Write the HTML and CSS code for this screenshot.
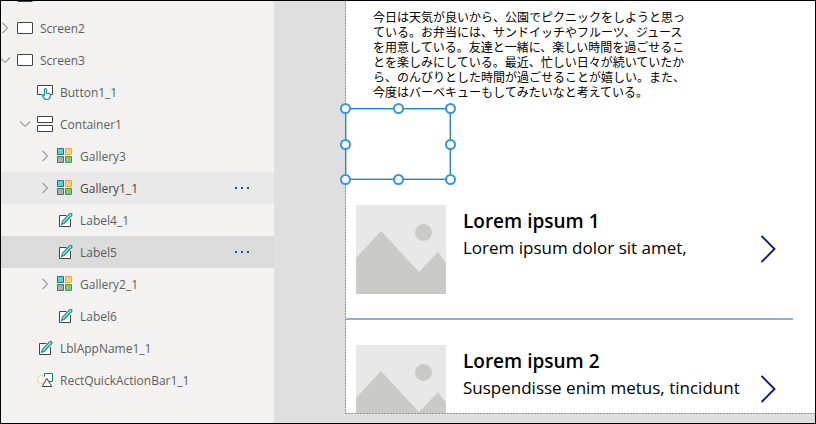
FILE: index.html
```html
<!DOCTYPE html>
<html lang="en">
<head>
<meta charset="utf-8">
<title>App editor</title>
<link rel="stylesheet" href="styles.css">
</head>
<body>
<svg class="defs" aria-hidden="true">
  <symbol id="screen" viewBox="0 0 16 16"><rect x="0.5" y="2.5" width="15" height="11" rx="0.5" fill="#fff" stroke="#444"/></symbol>
  <symbol id="button" viewBox="0 0 16 16"><path d="M5 10.5H.5v-9h15v9H13" fill="#fff" stroke="#444"/><path d="M7.5 11V5.5a1 1 0 0 1 2 0V9l3 .7q1 .3 1 1.3-.1 4.5-4 4.5-2.300 0-4-3.500-.2-1.500 1-1l1 1" fill="#fff" stroke="#10958c" stroke-width="1.200"/></symbol>
  <symbol id="container" viewBox="0 0 16 16"><path d="M.5.5h15v6H.5zM.5 9.500h15v6H.5z" fill="#fff" stroke="#444"/></symbol>
  <symbol id="gallery" viewBox="0 0 16 16"><path d="M.5.5h6v6h-6z" fill="#69cdc9" stroke="#038387"/><path d="M8.500.5h6v6h-6z" fill="#fdd085" stroke="#f2a83b"/><path d="M.5 8.500h6v6h-6z" fill="#b0aeac" stroke="#666"/><path d="M8.500 8.500h6v6h-6z" fill="#88c088" stroke="#3f9c46"/></symbol>
  <symbol id="label" viewBox="0 0 16 16"><path d="M13.500 7v7.500h-11v-11h7" fill="#fff"/><path d="M9.500 3.500h-7v11h11V7" fill="none" stroke="#444"/><path d="M4.500 12.500l1-3.200 7.300-7.500q1-.8 1.800 0 .7.900-.1 1.700l-7.200 7.700z" fill="#d8f0ee" stroke="#10958c" stroke-width="1.200"/><path d="M6.500 10.500l6-6.200" stroke="#69b9b5" stroke-width=".7"/></symbol>
  <symbol id="shapes" viewBox="0 0 16 16"><path d="M7.500 1.500h8v8h-8z" fill="#fff" stroke="#038387"/><circle cx="4.500" cy="7.500" r="4" fill="#fff" stroke="#f4c77c"/><path d="M10 6.500l4.800 8H5.200z" fill="#fff" stroke="#444"/></symbol>
  <symbol id="chevron" viewBox="0 0 12 12"><path d="M3.500 1l5 5-5 5" fill="none" stroke="#a19f9d" stroke-width="1.200"/></symbol>
  <symbol id="next" viewBox="0 0 16 30"><path d="M1.500 2l13 13-13 13" fill="none" stroke="#10197a" stroke-width="1.900"/></symbol>
  <symbol id="photo" viewBox="0 0 90 89"><path d="M0 0h90v89H0z" fill="#e8e8e8"/><circle cx="67.500" cy="27.500" r="8.500" fill="#cacac8"/><path d="M0 53l25-27 38 41 19-20 8 11v31H0z" fill="#cacac8"/></symbol>
</svg>
<nav class="tree" aria-label="Tree view">
  <ul>
    <li class="row"><svg class="icon"><use href="#screen"/></svg></li>
    <li class="row"><button class="toggle" aria-label="Expand Screen2"><svg><use href="#chevron"/></svg></button><svg class="icon"><use href="#screen"/></svg><span>Screen2</span></li>
    <li class="row"><button class="toggle open" aria-label="Collapse Screen3"><svg><use href="#chevron"/></svg></button><svg class="icon"><use href="#screen"/></svg><span>Screen3</span></li>
    <li class="row level-1"><svg class="icon"><use href="#button"/></svg><span>Button1_1</span></li>
    <li class="row level-1"><button class="toggle open" aria-label="Collapse Container1"><svg><use href="#chevron"/></svg></button><svg class="icon"><use href="#container"/></svg><span>Container1</span></li>
    <li class="row level-2"><button class="toggle" aria-label="Expand Gallery3"><svg><use href="#chevron"/></svg></button><svg class="icon"><use href="#gallery"/></svg><span>Gallery3</span></li>
    <li class="row level-2 hovered"><button class="toggle" aria-label="Expand Gallery1_1"><svg><use href="#chevron"/></svg></button><svg class="icon"><use href="#gallery"/></svg><span>Gallery1_1</span><button class="more" aria-label="More actions"><i></i><i></i><i></i></button></li>
    <li class="row level-2"><svg class="icon"><use href="#label"/></svg><span>Label4_1</span></li>
    <li class="row level-2 selected"><svg class="icon"><use href="#label"/></svg><span>Label5</span><button class="more" aria-label="More actions"><i></i><i></i><i></i></button></li>
    <li class="row level-2"><button class="toggle" aria-label="Expand Gallery2_1"><svg><use href="#chevron"/></svg></button><svg class="icon"><use href="#gallery"/></svg><span>Gallery2_1</span></li>
    <li class="row level-2"><svg class="icon"><use href="#label"/></svg><span>Label6</span></li>
    <li class="row level-1"><svg class="icon"><use href="#label"/></svg><span>LblAppName1_1</span></li>
    <li class="row level-1"><svg class="icon"><use href="#shapes"/></svg><span>RectQuickActionBar1_1</span></li>
  </ul>
</nav>
<main class="stage">
  <div class="canvas">
    <p class="story" lang="ja">今日は天気が良いから、公園でピクニックをしようと思っている。お弁当には、サンドイッチやフルーツ、ジュースを用意している。友達と一緒に、楽しい時間を過ごせることを楽しみにしている。最近、忙しい日々が続いていたから、のんびりとした時間が過ごせることが嬉しい。また、今度はバーベキューもしてみたいなと考えている。</p>
    <div class="selection">
      <i class="handle top left"></i><i class="handle top center"></i><i class="handle top right"></i>
      <i class="handle middle left"></i><i class="handle middle right"></i>
      <i class="handle bottom left"></i><i class="handle bottom center"></i><i class="handle bottom right"></i>
    </div>
    <div class="gallery">
      <article class="item">
        <svg class="photo"><use href="#photo"/></svg>
        <div class="text"><h2>Lorem ipsum 1</h2><p>Lorem ipsum dolor sit amet,</p></div>
        <button class="next" aria-label="Open Lorem ipsum 1"><svg><use href="#next"/></svg></button>
      </article>
      <article class="item">
        <svg class="photo"><use href="#photo"/></svg>
        <div class="text"><h2>Lorem ipsum 2</h2><p>Suspendisse enim metus, tincidunt</p></div>
        <button class="next" aria-label="Open Lorem ipsum 2"><svg><use href="#next"/></svg></button>
      </article>
    </div>
  </div>
</main>
</body>
</html>
```
FILE: styles.css
```css
* { box-sizing: border-box; }

body {
  display: flex;
  height: 100vh;
  margin: 0;
  overflow: hidden;
  border: 1px solid #000;
  background: #dfdfdf;
  font-family: "Open Sans", "Noto Sans", sans-serif;
}

svg { display: block; flex: none; }
.defs { display: none; }
h2, p, ul { margin: 0; padding: 0; }
ul { list-style: none; }

button {
  flex: none;
  padding: 0;
  border: 0;
  background: none;
}

/* Tree view */
.tree {
  flex: 0 0 273px;
  overflow: hidden;
  background: #f3f2f1;
  color: #605e5c;
  font-size: 12px;
}

.tree ul { margin-top: -21px; }

.row {
  display: grid;
  grid-template-columns: 16px 16px 1fr auto;
  align-items: center;
  height: 32px;
}

.level-1 { padding-left: 20px; }
.level-2 { padding-left: 40px; }
.hovered { background: #e9e9e9; color: #484644; }
.selected { background: #dbdbdb; }

.toggle { grid-column: 1; width: 12px; height: 12px; margin-left: -2px; }
.toggle svg { width: 12px; height: 12px; }
.open svg { transform: rotate(90deg); }
.icon { grid-column: 2; width: 16px; height: 16px; }
.row span { grid-column: 3; padding-left: 7px; }

.more {
  display: flex;
  gap: 4px;
  width: 16px;
  margin-right: 23px;
}
.more i { width: 2px; height: 2px; background: #24508a; }

/* Canvas */
.stage {
  flex: 1;
  min-width: 0;
  padding: 0 0 9px 71px;
}

.canvas {
  display: flex;
  flex-direction: column;
  height: 100%;
  padding: 0 0 1px 1px;
  background:
    repeating-linear-gradient(#4ea6ea 0 2px, #c5e2f8 2px 3px) left / 1px 100% no-repeat,
    repeating-linear-gradient(90deg, #4ea6ea 0 2px, #c5e2f8 2px 3px) bottom / 100% 1px no-repeat,
    #fff;
  color: #000;
}

.story {
  width: 344px;
  padding: 8px 4px 0 27px;
  font-family: "Noto Sans CJK JP", sans-serif;
  font-size: 12px;
  line-height: 15px;
}

.selection {
  position: relative;
  flex: none;
  width: 106px;
  height: 72px;
  margin: 9px 0 0 -1px;
  border: 1px solid #1f83d6;
  box-shadow: inset 0 0 0 1px #a5d0f2;
}

.handle {
  position: absolute;
  width: 11px;
  height: 11px;
  border: 2px solid #3a94dc;
  border-radius: 50%;
  background: #fff;
}
.top { top: -6px; }
.middle { top: calc(50% - 5px); }
.bottom { bottom: -6px; }
.left { left: -6px; }
.center { left: calc(50% - 5px); }
.right { right: -6px; }

.gallery {
  flex: 1;
  min-height: 0;
  margin-right: 22px;
  overflow: hidden;
}

.item {
  display: flex;
  height: 140px;
  padding: 25px 17px 0 10px;
  border-bottom: 2px solid #a0a9cc;
}

.photo { width: 90px; height: 89px; }

.text {
  flex: 1;
  min-width: 0;
  padding-left: 17px;
  white-space: nowrap;
}
.text h2 { font-size: 19px; font-weight: 600; line-height: 32px; }
.text p { font-size: 17px; line-height: 22px; }

.next { height: 88px; }
.next svg { width: 16px; height: 30px; }
```
